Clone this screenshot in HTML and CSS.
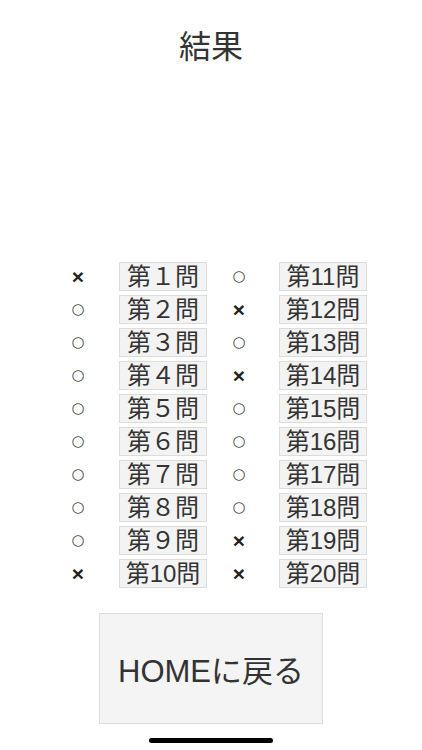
FILE: index.html
```html
<!DOCTYPE html>
<html lang="ja">
<head>
<meta charset="utf-8">
<title>結果</title>
<link rel="stylesheet" href="styles.css">
</head>
<body>
<div class="screen">
  <h1 class="title">結果</h1>
  <div class="grid">
    <div class="mark x">×</div><div class="q">第１問</div><div class="mark o">○</div><div class="q">第11問</div>
    <div class="mark o">○</div><div class="q">第２問</div><div class="mark x">×</div><div class="q">第12問</div>
    <div class="mark o">○</div><div class="q">第３問</div><div class="mark o">○</div><div class="q">第13問</div>
    <div class="mark o">○</div><div class="q">第４問</div><div class="mark x">×</div><div class="q">第14問</div>
    <div class="mark o">○</div><div class="q">第５問</div><div class="mark o">○</div><div class="q">第15問</div>
    <div class="mark o">○</div><div class="q">第６問</div><div class="mark o">○</div><div class="q">第16問</div>
    <div class="mark o">○</div><div class="q">第７問</div><div class="mark o">○</div><div class="q">第17問</div>
    <div class="mark o">○</div><div class="q">第８問</div><div class="mark o">○</div><div class="q">第18問</div>
    <div class="mark o">○</div><div class="q">第９問</div><div class="mark x">×</div><div class="q">第19問</div>
    <div class="mark x">×</div><div class="q">第10問</div><div class="mark x">×</div><div class="q">第20問</div>
  </div>
  <button class="home">HOMEに戻る</button>
  <div class="homebar"></div>
</div>
</body>
</html>
```
FILE: styles.css
```css
* { box-sizing: border-box; }
html, body { margin: 0; padding: 0; background: #fff; }
body {
  font-family: "Liberation Sans", "Noto Sans CJK JP", sans-serif;
  color: #333;
}
.screen {
  position: relative;
  width: 422px;
  height: 750px;
  overflow: hidden;
}
.title {
  margin: 27px 0 0;
  height: 40px;
  line-height: 40px;
  font-size: 32px;
  font-weight: normal;
  text-align: center;
  color: #333;
}
.grid {
  margin: 195px 0 0 49px;
  display: grid;
  grid-template-columns: 58px 100px 64px 96px;
  grid-auto-rows: 29px;
  row-gap: 4px;
}
.mark {
  text-align: center;
  line-height: 29px;
  color: #222;
}
.mark.x { font-weight: bold; font-size: 21px; }
.mark.o { font-size: 15px; font-family: "DejaVu Sans", sans-serif; color: #444; }
.q {
  justify-self: end;
  width: 88px;
  height: 29px;
  border: 1px solid #dcdcdc;
  background: #f3f3f3;
  text-align: center;
  font-size: 24px;
  line-height: 27px;
  color: #333;
  white-space: nowrap;
}
.home {
  display: block;
  margin: 25px 0 0 99px;
  width: 224px;
  height: 111px;
  border: 1px solid #dedede;
  background: #f4f4f4;
  font-family: "Liberation Sans", "Noto Sans CJK JP", sans-serif;
  font-size: 31px;
  color: #333;
  padding: 0;
}
.homebar {
  position: absolute;
  left: 149px;
  top: 738px;
  width: 124px;
  height: 5px;
  border-radius: 3px;
  background: #000;
}
```
